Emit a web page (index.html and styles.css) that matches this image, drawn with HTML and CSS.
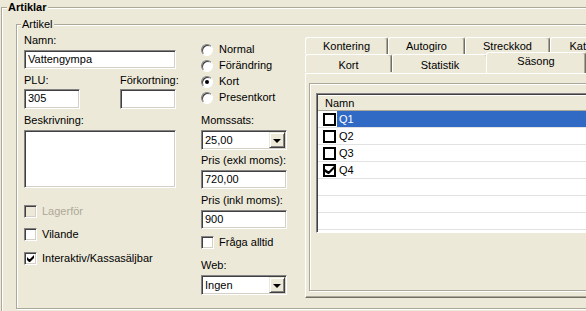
FILE: index.html
```html
<!DOCTYPE html>
<html lang="sv">
<head>
    <meta charset="utf-8">
    <title>Artiklar</title>
    <link rel="stylesheet" href="styles.css">
</head>
<body>
    <fieldset class="group outer">
        <legend class="outer-title">Artiklar</legend>

        <fieldset class="group inner">
            <legend class="inner-title">Artikel</legend>

            <div class="columns">
                <!-- left column: name, codes, description -->
                <div class="col-left">
                    <div class="lbl">Namn:</div>
                    <div class="field wide">Vattengympa</div>

                    <div class="pair">
                        <div class="pair-item">
                            <div class="lbl">PLU:</div>
                            <div class="field short">305</div>
                        </div>
                        <div class="pair-item">
                            <div class="lbl">Förkortning:</div>
                            <div class="field short"></div>
                        </div>
                    </div>

                    <div class="lbl desc-lbl">Beskrivning:</div>
                    <div class="field memo"></div>

                    <div class="check-row first-check disabled">
                        <span class="box"></span>
                        <span>Lagerför</span>
                    </div>
                    <div class="check-row vilande">
                        <span class="box"></span>
                        <span>Vilande</span>
                    </div>
                    <div class="check-row kassa">
                        <span class="box">
                            <svg width="7" height="7" viewBox="0 0 7 7"><path d="M0 2v3l2 2h1l4-4v-3l-4 4h-1z" fill="#000"/></svg>
                        </span>
                        <span>Interaktiv/Kassasäljbar</span>
                    </div>
                </div>

                <!-- middle column: type, vat and prices -->
                <div class="col-mid">
                    <div class="radios">
                        <div class="radio-row"><span class="radio"></span><span>Normal</span></div>
                        <div class="radio-row"><span class="radio"></span><span>Förändring</span></div>
                        <div class="radio-row"><span class="radio"><span class="dot"></span></span><span>Kort</span></div>
                        <div class="radio-row"><span class="radio"></span><span>Presentkort</span></div>
                    </div>

                    <div class="lbl moms-lbl">Momssats:</div>
                    <div class="field combo">
                        <span>25,00</span>
                        <span class="drop"><span class="arrow"></span></span>
                    </div>

                    <div class="lbl price-lbl">Pris (exkl moms):</div>
                    <div class="field mid">720,00</div>

                    <div class="lbl price-lbl2">Pris (inkl moms):</div>
                    <div class="field mid">900</div>

                    <div class="check-row fraga">
                        <span class="box"></span>
                        <span>Fråga alltid</span>
                    </div>

                    <div class="lbl web-lbl">Web:</div>
                    <div class="field combo">
                        <span>Ingen</span>
                        <span class="drop"><span class="arrow"></span></span>
                    </div>
                </div>

                <!-- right column: tab control -->
                <div class="tabs">
                    <div class="tab-row back">
                        <div class="tab" style="width: 83px">Kontering</div>
                        <div class="tab" style="width: 77px">Autogiro</div>
                        <div class="tab" style="width: 85px">Streckkod</div>
                        <div class="tab" style="width: 80px">Kategori</div>
                    </div>
                    <div class="tab-row front">
                        <div class="tab" style="width: 87px">Kort</div>
                        <div class="tab" style="width: 96px">Statistik</div>
                        <div class="tab active" style="width: 100px">Säsong</div>
                    </div>

                    <div class="tab-panel">
                        <div class="frame">
                            <div class="listview">
                                <div class="lv-header">Namn</div>
                                <div class="lv-row">
                                    <span class="lv-box"></span>
                                    <span class="lv-text selected">Q1</span>
                                </div>
                                <div class="lv-row">
                                    <span class="lv-box"></span>
                                    <span class="lv-text">Q2</span>
                                </div>
                                <div class="lv-row">
                                    <span class="lv-box"></span>
                                    <span class="lv-text">Q3</span>
                                </div>
                                <div class="lv-row">
                                    <span class="lv-box">
                                        <svg width="9" height="8" viewBox="0 0 9 8"><path d="M0 3v3l3 2h1l5-5v-3l-5 5h-1z" fill="#000"/></svg>
                                    </span>
                                    <span class="lv-text">Q4</span>
                                </div>
                                <div class="lv-row"></div>
                                <div class="lv-row"></div>
                                <div class="lv-row"></div>
                                <div class="lv-row"></div>
                            </div>
                        </div>
                    </div>
                </div>
            </div>
        </fieldset>
    </fieldset>
</body>
</html>
```

FILE: styles.css
```css
body {
    margin: 0;
    background-color: #ECE9D8;
    font-family: "Liberation Sans", Arial, sans-serif;
    font-size: 11px;
    color: #000;
    overflow: hidden;
}

/* etched group boxes */
.group {
    border: 1px solid #ACA899;
    box-shadow: inset 1px 1px 0 #fff, 1px 1px 0 #fff;
    padding: 0;
}
.group legend {
    background-color: #ECE9D8;
    padding: 0 1px;
}
.outer {
    margin: 0 0 0 1px;
    width: 660px;
    padding-bottom: 20px;
}
.outer-title {
    font-weight: bold;
    line-height: 15px;
    margin-left: 5px;
}
.inner {
    margin: 3px 0 0 14px;
    width: 630px;
    padding-bottom: 10px;
}
.inner-title {
    line-height: 13px;
    margin-left: 4px;
}

.columns {
    display: flex;
    align-items: flex-start;
    margin: 3px 0 0 7px;
}

.lbl {
    line-height: 13px;
    height: 13px;
    white-space: nowrap;
}

/* sunken text fields */
.field {
    box-sizing: border-box;
    background-color: #fff;
    border: 1px solid;
    border-color: #848284 #fff #fff #848284;
    box-shadow: inset 1px 1px 0 #404040, inset -1px -1px 0 #D4D0C8;
    padding: 0 3px;
    height: 19px;
    line-height: 17px;
    margin-top: 3px;
    white-space: nowrap;
}

.col-left {
    width: 152px;
}
.wide {
    width: 152px;
}
.pair {
    display: flex;
    justify-content: space-between;
    margin-top: 5px;
}
.pair-item {
    width: 56px;
}
.pair .field {
    margin-top: 2px;
}
.short {
    width: 56px;
    height: 20px;
}
.desc-lbl {
    margin-top: 5px;
}
.memo {
    height: 58px;
}

/* check boxes */
.check-row {
    display: flex;
    align-items: center;
    gap: 5px;
    height: 13px;
    line-height: 13px;
    white-space: nowrap;
}
.box {
    box-sizing: border-box;
    width: 13px;
    height: 13px;
    background-color: #fff;
    border: 1px solid;
    border-color: #848284 #fff #fff #848284;
    box-shadow: inset 1px 1px 0 #404040, inset -1px -1px 0 #D4D0C8;
    display: flex;
    align-items: center;
    justify-content: center;
}
.disabled {
    color: #ACA899;
}
.disabled .box {
    background-color: #ECE9D8;
}
.first-check {
    margin-top: 17px;
}
.vilande {
    margin-top: 10px;
}
.kassa {
    margin-top: 11px;
}

.col-mid {
    width: 86px;
    margin-left: 25px;
}
.radios {
    margin-top: 9px;
    display: flex;
    flex-direction: column;
    gap: 3px;
}
.radio-row {
    display: flex;
    align-items: center;
    gap: 6px;
    height: 13px;
    line-height: 13px;
}
.radio {
    box-sizing: border-box;
    width: 12px;
    height: 12px;
    border-radius: 50%;
    background-color: #fff;
    border: 1px solid;
    border-color: #848284 #fff #fff #848284;
    box-shadow: inset 1px 1px 0 #404040;
    display: flex;
    align-items: center;
    justify-content: center;
}
.dot {
    width: 4px;
    height: 4px;
    border-radius: 50%;
    background-color: #000;
}
.moms-lbl {
    margin-top: 10px;
}
.combo {
    height: 20px;
    display: flex;
    justify-content: space-between;
    align-items: center;
    padding: 0 1px 0 3px;
}
.drop {
    box-sizing: border-box;
    width: 16px;
    height: 16px;
    background-color: #ECE9D8;
    border: 1px solid;
    border-color: #ECE9D8 #404040 #404040 #ECE9D8;
    box-shadow: inset 1px 1px 0 #fff, inset -1px -1px 0 #848284;
    display: flex;
    align-items: center;
    justify-content: center;
}
.arrow {
    width: 0;
    height: 0;
    border-left: 4px solid transparent;
    border-right: 4px solid transparent;
    border-top: 4px solid #000;
    margin-top: 1px;
}
.price-lbl {
    margin-top: 4px;
}
.price-lbl2 {
    margin-top: 5px;
}
.mid {
    width: 86px;
}
.fraga {
    margin-top: 7px;
}
.web-lbl {
    margin-top: 10px;
}

/* tab control */
.tabs {
    margin-left: 18px;
    margin-top: 3px;
    width: 300px;
}
.tab-row {
    display: flex;
    white-space: nowrap;
}
.tab {
    box-sizing: border-box;
    flex: none;
    text-align: center;
    border: 1px solid;
    border-bottom: none;
    border-color: #fff #716F64 transparent #fff;
    box-shadow: inset -1px 0 0 #ACA899;
    border-radius: 3px 3px 0 0;
    overflow: hidden;
}
.back .tab {
    height: 17px;
    line-height: 15px;
    padding-top: 1px;
}
.front .tab {
    height: 18px;
    line-height: 14px;
    padding-top: 3px;
}
.front .active {
    position: relative;
    z-index: 1;
    height: 21px;
    margin: -2px -2px 0 -2px;
    padding-top: 1px;
    background-color: #ECE9D8;
}
.tab-panel {
    box-sizing: border-box;
    height: 225px;
    border: 1px solid;
    border-color: #fff #716F64 #716F64 #fff;
    box-shadow: inset -1px -1px 0 #ACA899;
    padding: 9px 0 0 3px;
}
.frame {
    height: 208px;
    border: 1px solid #ACA899;
    box-shadow: inset 1px 1px 0 #fff, 1px 1px 0 #fff;
    padding: 9px 0 0 6px;
    box-sizing: border-box;
}

/* list view */
.listview {
    box-sizing: border-box;
    height: 140px;
    background-color: #fff;
    border: 1px solid;
    border-color: #848284 #fff #fff #848284;
    box-shadow: inset 1px 1px 0 #404040;
    padding: 1px 0 0 1px;
    overflow: hidden;
}
.lv-header {
    height: 16px;
    line-height: 16px;
    padding-left: 7px;
    background-color: #ECE9D8;
    border-bottom: 1px solid #ACA899;
    box-sizing: border-box;
    box-shadow: inset 0 1px 0 #fff;
}
.lv-row {
    display: flex;
    align-items: center;
    height: 17px;
    border-bottom: 1px solid #E2E2E2;
    box-sizing: border-box;
    padding-left: 5px;
}
.lv-box {
    box-sizing: border-box;
    width: 13px;
    height: 13px;
    border: 2px solid #000;
    background-color: #fff;
    display: flex;
    align-items: center;
    justify-content: center;
}
.lv-text {
    flex: 1;
    height: 16px;
    line-height: 16px;
    margin-left: 1px;
    padding-left: 2px;
}
.selected {
    background-color: #316AC5;
    color: #fff;
}
```
